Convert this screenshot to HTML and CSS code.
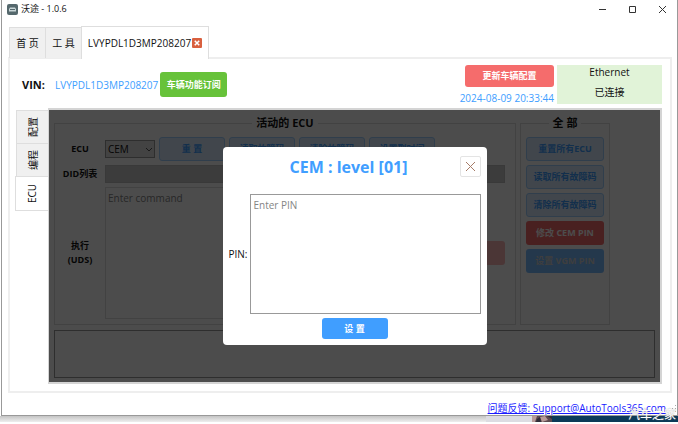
FILE: index.html
```html
<!DOCTYPE html>
<html lang="zh">

<head>
    <meta charset="UTF-8">
    <title>沃途 - 1.0.6</title>
    <link rel="stylesheet" href="styles.css">
</head>

<body>
    <div class="window">
        <header class="titlebar">
            <svg class="app-icon" viewBox="0 0 11 11">
                <rect width="11" height="11" rx="2" fill="#55686d" />
                <path d="M2 5 L3 3.5 H8 L9 5 V7.5 H2 Z" fill="#c9d6d8" />
                <path d="M3 5.5 H8" stroke="#55686d" />
            </svg>
            <span class="app-name">沃途 - 1.0.6</span>
            <button class="win-btn" type="button" aria-label="最小化">
                <svg viewBox="0 0 9 9"><path d="M1 4.5 H8" /></svg>
            </button>
            <button class="win-btn" type="button" aria-label="最大化">
                <svg viewBox="0 0 9 9"><path d="M1.5 1.5 H7.5 V7.5 H1.5 Z" /></svg>
            </button>
            <button class="win-btn" type="button" aria-label="关闭">
                <svg viewBox="0 0 9 9"><path d="M1 1 L8 8 M8 1 L1 8" /></svg>
            </button>
        </header>

        <nav class="tabs">
            <button class="tab" type="button">首 页</button>
            <button class="tab" type="button">工 具</button>
            <button class="tab active" type="button">LVYPDL1D3MP208207
                <svg class="tab-close" viewBox="0 0 9 9">
                    <rect width="9" height="9" rx="1" fill="#d9603f" />
                    <path d="M2.5 2.5 L6.5 6.5 M6.5 2.5 L2.5 6.5" stroke="#fff" stroke-width="1.4" />
                </svg>
            </button>
        </nav>

        <main class="page">
            <section class="vehicle">
                <strong class="vin-label">VIN:</strong>
                <span class="vin">LVYPDL1D3MP208207</span>
                <button class="btn green" type="button">车辆功能订阅</button>
                <div class="update">
                    <button class="btn red" type="button">更新车辆配置</button>
                    <span>2024-08-09 20:33:44</span>
                </div>
                <div class="status">
                    <span>Ethernet</span>
                    <span>已连接</span>
                </div>
            </section>

            <section class="work">
                <nav class="side-tabs">
                    <button class="side-tab" type="button">配置</button>
                    <button class="side-tab" type="button">编程</button>
                    <button class="side-tab active" type="button">ECU</button>
                </nav>

                <div class="ecu">
                    <div class="groups">
                        <fieldset class="group current">
                            <legend>活动的 ECU</legend>
                            <div class="form">
                                <label for="ecuSelect">ECU</label>
                                <div class="row">
                                    <div class="select">
                                        <select id="ecuSelect">
                                            <option>CEM</option>
                                        </select>
                                        <svg viewBox="0 0 8 5"><path d="M1 1 L4 4 L7 1" /></svg>
                                    </div>
                                    <button class="btn plain" type="button">重 置</button>
                                    <button class="btn plain" type="button">读取故障码</button>
                                    <button class="btn plain" type="button">清除故障码</button>
                                    <button class="btn plain" type="button">设置到时间</button>
                                </div>
                                <label for="didList">DID列表</label>
                                <select id="didList" class="did"></select>
                                <label for="command">执行<br>(UDS)</label>
                                <div class="row run">
                                    <textarea id="command" placeholder="Enter command"></textarea>
                                    <button class="btn pale-red" type="button">执 行</button>
                                </div>
                            </div>
                        </fieldset>
                        <fieldset class="group all">
                            <legend>全 部</legend>
                            <div class="stack">
                                <button class="btn plain" type="button">重置所有ECU</button>
                                <button class="btn plain" type="button">读取所有故障码</button>
                                <button class="btn plain" type="button">清除所有故障码</button>
                                <button class="btn red" type="button">修改 CEM PIN</button>
                                <button class="btn pale-blue" type="button">设置 VGM PIN</button>
                            </div>
                        </fieldset>
                    </div>
                    <div class="console"></div>

                    <div class="overlay">
                        <form class="dialog">
                            <div class="dialog-head">
                                <h2>CEM : level [01]</h2>
                                <button class="dialog-close" type="button" aria-label="关闭">
                                    <svg viewBox="0 0 11 11"><path d="M1 1 L10 10 M10 1 L1 10" /></svg>
                                </button>
                            </div>
                            <div class="pin-row">
                                <label for="pin">PIN:</label>
                                <textarea id="pin" placeholder="Enter PIN"></textarea>
                            </div>
                            <button class="btn blue" type="button">设 置</button>
                        </form>
                    </div>
                </div>
            </section>
        </main>

        <footer class="footer">
            <a href="mailto:Support@AutoTools365.com">问题反馈: Support@AutoTools365.com</a>
            <svg class="grip" viewBox="0 0 8 8">
                <path d="M6 1h1v1h-1z M3 4h1v1h-1z M6 4h1v1h-1z M0 7h1v1h-1z M3 7h1v1h-1z M6 7h1v1h-1z" fill="#aaa" />
            </svg>
        </footer>
    </div>

    <div class="desktop">
        <div class="desk-gray"></div>
        <div class="desk-light"></div>
        <svg class="desk-photo" viewBox="0 0 20 6" preserveAspectRatio="none">
            <rect width="20" height="6" fill="#5d4a50" />
            <path d="M0 0 H5 L3 6 H0 Z M8 1 L13 0 L16 4 L10 6 Z" fill="#b89a98" />
            <path d="M5 3 L8 1 L9 6 H4 Z M15 0 H20 V3 Z" fill="#2f2c38" />
        </svg>
        <div class="desk-blue"></div>
    </div>
    <div class="watermark">汽车之家</div>
</body>

</html>
```
FILE: styles.css
```css
* {
    box-sizing: border-box;
}

body {
    position: relative;
    height: 100vh;
    margin: 0;
    display: flex;
    flex-direction: column;
    background-color: white;
    color: #111;
    font-family: "Open Sans", "Noto Sans CJK SC", sans-serif;
    font-size: 10px;
    line-height: 14px;
    overflow: hidden;
}

button,
select,
textarea {
    font: inherit;
    color: inherit;
    margin: 0;
    padding: 0;
}

.window {
    flex: 1;
    min-height: 0;
    display: flex;
    flex-direction: column;
    margin-left: 1px;
    border: 1px solid #999;
    border-top: none;
    background-color: white;
}

/* title bar */
.titlebar {
    display: flex;
    align-items: center;
    height: 18px;
    padding-left: 5px;
    font-size: 9px;
}

.app-icon {
    width: 11px;
    height: 11px;
    margin-right: 3px;
}

.app-name {
    flex: 1;
}

.win-btn {
    width: 30px;
    height: 18px;
    border: none;
    background: none;
}

.win-btn svg {
    display: block;
    width: 9px;
    height: 9px;
    margin: auto;
    fill: none;
    stroke: #333;
}

/* top tabs */
.tabs {
    position: relative;
    display: flex;
    align-items: flex-end;
    height: 41px;
    margin-bottom: -2px;
    padding-left: 7px;
}

.tab {
    height: 31px;
    width: 36px;
    margin-bottom: 1px;
    border: 1px solid #dedede;
    border-right: none;
    border-bottom: none;
    background-color: #f0f0f0;
}

.tab.active {
    display: flex;
    align-items: center;
    justify-content: center;
    gap: 1px;
    width: 128px;
    height: 33px;
    margin-bottom: 0;
    border-right: 1px solid #dedede;
    background-color: white;
}

.tab-close {
    width: 10px;
    height: 10px;
}

.page {
    flex: 1;
    min-height: 0;
    display: flex;
    flex-direction: column;
    margin: 0 5px 0 6px;
    padding: 6px 8px 7px 5px;
    border: 2px solid #eee;
}

.vehicle {
    display: flex;
    align-items: center;
    height: 39px;
    margin-bottom: 4px;
    padding-left: 7px;
}

.vin-label {
    width: 33px;
    font-size: 11px;
}

.vin {
    margin-right: 2px;
    color: #409eff;
}

.btn {
    border: 1px solid transparent;
    border-radius: 3px;
    color: white;
    font-size: 9px;
    font-weight: bold;
    white-space: nowrap;
}

.green {
    width: 67px;
    height: 25px;
    background-color: #67c23a;
}

.red {
    background-color: #f56c6c;
}

.blue {
    background-color: #409eff;
}

.plain {
    border-color: #a0cfff;
    background-color: #d9ecff;
    color: #409eff;
}

.pale-red {
    background-color: #fab6b6;
}

.pale-blue {
    background-color: #79bbff;
    color: #d0d0d0;
}

.update {
    display: flex;
    flex-direction: column;
    align-items: flex-end;
    gap: 4px;
    margin: 0 3px 0 auto;
    color: #409eff;
}

.update .btn {
    width: 89px;
    height: 22px;
}

.status {
    display: flex;
    flex-direction: column;
    align-items: center;
    gap: 6px;
    width: 105px;
    height: 39px;
    background-color: #e1f3d8;
}

/* side tabs */
.work {
    flex: 1;
    min-height: 0;
    display: flex;
}

.side-tabs {
    display: flex;
    flex-direction: column;
    padding-top: 2px;
    width: 33px;
}

/* turned round so that the text reads from bottom to top */
.side-tab {
    height: 33px;
    margin-left: 1px;
    border: 1px solid #dedede;
    border-width: 0 1px 1px 0;
    background-color: #f0f0f0;
    line-height: 30px;
    text-align: center;
    text-orientation: sideways;
    writing-mode: vertical-rl;
    transform: rotate(180deg);
}

.side-tab.active {
    height: 35px;
    margin-left: 0;
    border-width: 1px 1px 1px 0;
    background-color: white;
}

/* ECU panel */
.ecu {
    position: relative;
    flex: 1;
    min-width: 0;
    display: flex;
    flex-direction: column;
    padding: 6px 5px 4px 5px;
    border: 2px solid #d4d4d4;
    border-left-width: 1px;
}

.groups {
    flex: 1;
    min-height: 0;
    display: flex;
    gap: 4px;
    margin-bottom: 5px;
}

.group {
    min-width: 0;
    margin: 0;
    padding: 0 5px 5px;
    border: 1px solid #dcdcdc;
}

.group legend {
    height: 14px;
    padding: 0 4px;
    margin: 0 auto;
    font-size: 11px;
    font-weight: bold;
    text-align: center;
}

.current {
    width: 462px;
}

.all {
    width: 90px;
}

.form {
    display: grid;
    grid-template-columns: 40px 1fr;
    grid-template-rows: 24px 18px 1fr;
    row-gap: 4px;
    column-gap: 5px;
    height: 100%;
    padding: 7px 5px 0 0;
    align-items: center;
    text-align: center;
    font-size: 9px;
    font-weight: bold;
}

.row {
    display: flex;
    align-items: center;
    gap: 4px;
}

.row .btn {
    width: 66px;
    height: 24px;
}

select {
    appearance: none;
    border: 1px solid #999;
    border-radius: 0;
    background-color: #e0e0e0;
}

.select {
    position: relative;
    width: 50px;
    height: 18px;
}

.select select {
    width: 100%;
    height: 100%;
    padding-left: 2px;
    font-size: 10px;
    font-weight: normal;
}

.select svg {
    position: absolute;
    top: 7px;
    right: 2px;
    width: 8px;
    height: 5px;
    fill: none;
    stroke: #555;
    pointer-events: none;
}

.did {
    height: 18px;
    width: 100%;
    border-color: #c0c0c0;
    background-color: #c8c8c8;
}

.run {
    height: 100%;
}

textarea {
    padding: 3px 2px;
    border: 1px solid #999;
    border-radius: 0;
    background-color: white;
    font-weight: normal;
    resize: none;
}

textarea::placeholder {
    color: #858585;
}

.run textarea {
    flex: 1;
    height: 100%;
    border-color: #dcdcdc;
    font-size: 10px;
}

.stack {
    display: flex;
    flex-direction: column;
    gap: 4px;
    padding-top: 7px;
}

.stack .btn {
    height: 24px;
}

.console {
    height: 48px;
    border: 1px solid #999;
}

/* PIN dialog */
.overlay {
    position: absolute;
    inset: 0;
    display: flex;
    align-items: center;
    justify-content: center;
    background-color: rgba(0, 0, 0, 0.7);
}

.dialog {
    display: flex;
    flex-direction: column;
    align-items: center;
    width: 264px;
    height: 198px;
    padding: 6px;
    border-radius: 4px;
    background-color: white;
}

.dialog-head {
    position: relative;
    align-self: stretch;
    height: 41px;
}

.dialog-head h2 {
    margin: 0;
    padding: 4px 12px 0 0;
    color: #409eff;
    font-size: 16px;
    line-height: 20px;
    text-align: center;
}

.dialog-close {
    position: absolute;
    top: 3px;
    right: 0;
    width: 21px;
    height: 21px;
    border: 1px solid #e4e4e4;
    border-radius: 2px;
    background-color: white;
}

.dialog-close svg {
    display: block;
    width: 11px;
    height: 11px;
    margin: auto;
    fill: none;
    stroke: #a67c68;
}

.pin-row {
    display: flex;
    align-items: center;
    align-self: stretch;
    gap: 3px;
    height: 120px;
    margin-bottom: 4px;
}

.pin-row textarea {
    flex: 1;
    height: 100%;
}

.dialog .blue {
    width: 66px;
    height: 21px;
}

/* footer */
.footer {
    display: flex;
    align-items: center;
    justify-content: flex-end;
    gap: 3px;
    height: 22px;
    padding-top: 8px;
}

.footer a {
    color: #1a1aff;
}

.grip {
    width: 8px;
    height: 8px;
}

.desktop {
    display: flex;
    height: 6px;
    margin-bottom: 2px;
}

.desk-gray {
    flex: 1;
    background: linear-gradient(#c4c4c4, #eee);
}

.desk-light {
    width: 46px;
    background-color: #dcdce2;
}

.desk-photo {
    width: 20px;
    height: 6px;
}

.desk-blue {
    width: 126px;
    background-color: #0c3a58;
}

.watermark {
    position: absolute;
    right: 2px;
    bottom: 2px;
    color: white;
    font-size: 12px;
    text-shadow: 0 0 1px #888;
}
```
